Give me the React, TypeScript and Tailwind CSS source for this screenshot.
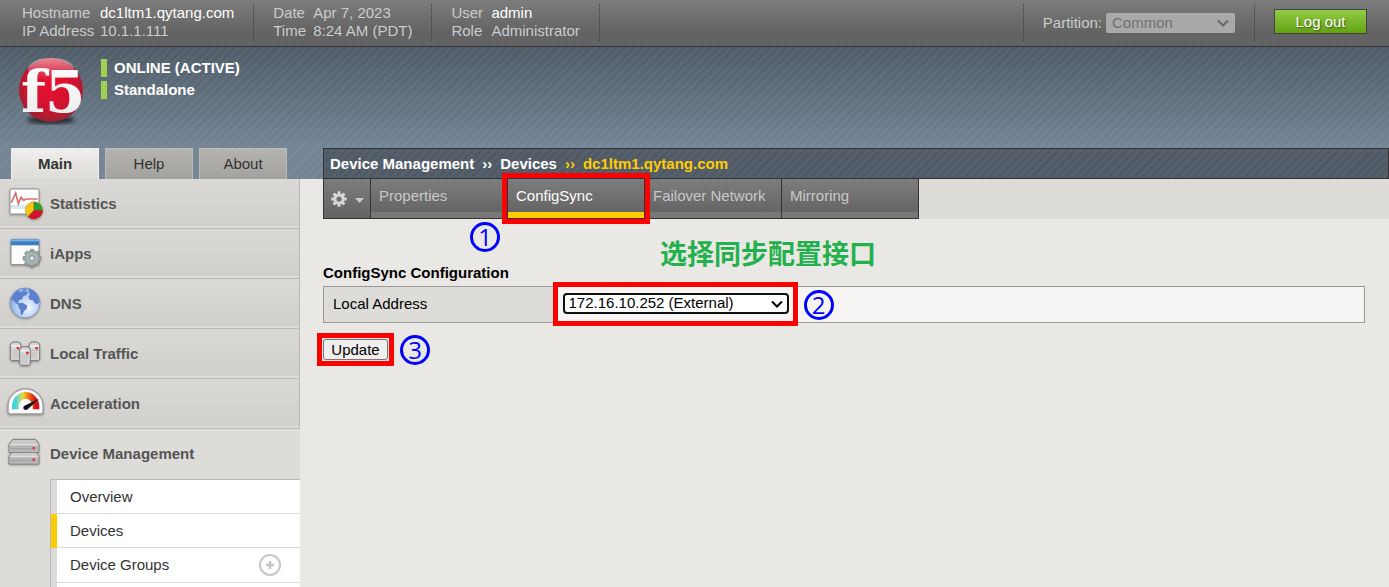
import type { ReactNode } from 'react';

const STRIPES =
  'bg-[repeating-linear-gradient(135deg,rgba(255,255,255,0.035)_0px,rgba(255,255,255,0.035)_3px,transparent_3px,transparent_6px)]';

function Logo() {
  return (
    <svg viewBox="0 0 72 72" className="h-[72px] w-[72px] shrink-0" role="img" aria-label="F5">
      <defs>
        <radialGradient id="ball" cx="50%" cy="42%" r="60%">
          <stop offset="0" stopColor="#e8112f" />
          <stop offset="0.65" stopColor="#cf1330" />
          <stop offset="0.9" stopColor="#a3202f" />
          <stop offset="1" stopColor="#8a2a33" />
        </radialGradient>
        <linearGradient id="gloss" x1="0" y1="0" x2="0" y2="1">
          <stop offset="0" stopColor="#fff" stopOpacity="0.5" />
          <stop offset="1" stopColor="#fff" stopOpacity="0" />
        </linearGradient>
        <linearGradient id="letters" x1="0" y1="0" x2="0" y2="1">
          <stop offset="0" stopColor="#fff" />
          <stop offset="1" stopColor="#e9e9ea" />
        </linearGradient>
        <filter id="soft">
          <feGaussianBlur stdDeviation="2" />
        </filter>
      </defs>
      <ellipse cx="36" cy="64" rx="24" ry="4" fill="#20262d" filter="url(#soft)" />
      <circle cx="36" cy="34" r="32" fill="url(#ball)" />
      <ellipse cx="36" cy="13" rx="23" ry="11" fill="url(#gloss)" />
      <g fill="url(#letters)" fontFamily="'DejaVu Serif', serif" fontWeight="700">
        <text x="6" y="56" fontSize="58">f</text>
        <text x="30" y="56" fontSize="58">5</text>
      </g>
    </svg>
  );
}

function StatisticsIcon() {
  return (
    <>
      <rect x="6" y="9" width="87" height="75" rx="3" fill="#fff" stroke="#8f8f8f" strokeWidth="3" />
      <path d="M9 60h81M9 66h81" stroke="#cfdfee" strokeWidth="4" />
      <path d="M10 50l13-29 8 32 8-19 8 9 6-4h36" fill="none" stroke="#d86c72" strokeWidth="5" />
      <circle cx="78" cy="73" r="26" fill="#f5c518" stroke="#8a6a20" strokeWidth="1" />
      <path d="M78 73V47a26 26 0 0 1 26 26z" fill="#27a22d" />
      <path d="M78 73h26a26 26 0 0 1-44 19z" fill="#d5152f" />
      <path d="M78 73V47M78 73h26M78 73L60 92" stroke="#5b4a1a" strokeWidth="1.5" />
    </>
  );
}

const TEETH = [0, 45, 90, 135, 180, 225, 270, 315];

function IAppsIcon() {
  return (
    <>
      <rect x="9" y="10" width="84" height="76" rx="3" fill="#fcfcfc" stroke="#858585" strokeWidth="3" />
      <rect x="9" y="10" width="84" height="18" fill="#3c7fc0" />
      <rect x="9" y="10" width="84" height="6" fill="#79b4e6" />
      <g fill="#a3aeae" stroke="#6f7b7b" strokeWidth="2">
        {TEETH.map((a) => (
          <rect key={a} x="66" y="40" width="12" height="14" rx="3" transform={`rotate(${a} 72 67)`} />
        ))}
        <circle cx="72" cy="67" r="21" />
      </g>
      <circle cx="72" cy="67" r="20" fill="#a9b4b4" />
      <circle cx="72" cy="67" r="8" fill="#dfe3e3" stroke="#7f8a8a" strokeWidth="3" />
    </>
  );
}

function DnsIcon() {
  return (
    <>
      <defs>
        <radialGradient id="globe" cx="60%" cy="65%" r="65%">
          <stop offset="0" stopColor="#f3f8ff" />
          <stop offset="0.6" stopColor="#b7cdf2" />
          <stop offset="1" stopColor="#7d9fd9" />
        </radialGradient>
      </defs>
      <circle cx="51" cy="51" r="45" fill="url(#globe)" stroke="#8797b8" strokeWidth="3" />
      <path
        d="M10 42c4-18 16-31 32-35l10 2-3 7 9 2-2 8-10 5-4 9-9 3-3 7 7 5-5 3-10-8-6-9zM33 52l12-1 13 8-2 9-8 7-5 12-5-1-1-14-6-9zM64 9c13 3 22 12 27 22l4 16-7 8-8-3-5-9-10-2-4-9 6-7-4-6z"
        fill="#5b80cf"
      />
      <path d="M30 12l14-5 4 6-12 7z" fill="#8fb0ea" />
    </>
  );
}

function ServerTower({ x, y }: { x: number; y: number }) {
  return (
    <g transform={`translate(${x} ${y})`}>
      <path d="M2 12Q4 2 12 2h12q8 0 10 10v42l-5 4H7l-5-4z" fill="#d5d5d5" stroke="#767676" strokeWidth="3" />
      <path d="M5 14h26" stroke="#f4f4f4" strokeWidth="4" />
      <path d="M8 28h12M8 35h18M8 42h18M8 49h18" stroke="#b4b4b4" strokeWidth="2" />
      <rect x="21" y="17" width="8" height="7" fill="#ef2b3c" />
      <rect x="23" y="25" width="4" height="4" fill="#57c45a" />
    </g>
  );
}

function TrafficIcon() {
  return (
    <>
      <ServerTower x={5} y={16} />
      <ServerTower x={61} y={16} />
      <ServerTower x={33} y={30} />
    </>
  );
}

function AccelerationIcon() {
  return (
    <>
      <defs>
        <linearGradient id="dial" x1="0" x2="1">
          <stop offset="0" stopColor="#43d3d6" />
          <stop offset="0.2" stopColor="#9bdc9b" />
          <stop offset="0.4" stopColor="#f2cf1d" />
          <stop offset="0.65" stopColor="#f06a16" />
          <stop offset="1" stopColor="#d5111e" />
        </linearGradient>
      </defs>
      <path d="M0 60a52 51 0 0 1 105 0v18q0 6-6 6H6q-6 0-6-6z" fill="#fbfbfb" stroke="#9a9a9a" strokeWidth="4" />
      <path d="M22 70V62a31 34 0 0 1 62 0v8" fill="none" stroke="url(#dial)" strokeWidth="20" />
      <path d="M48 60L93 38 60 69q-7 6-13 0-3-5 1-9z" fill="#111" />
    </>
  );
}

function Appliance({ y }: { y: number }) {
  return (
    <g transform={`translate(0 ${y})`}>
      <path d="M15 1h68l10 15v24H3V16z" fill="#c9c9c9" stroke="#7c7c7c" strokeWidth="3" />
      <path d="M5 17h86" stroke="#e6e6e6" strokeWidth="3" />
      <path d="M5 20h86v18H5z" fill="#b5b5b5" />
      <path d="M10 29h58" stroke="#a0a0a0" strokeWidth="3" />
      <rect x="73" y="24" width="8" height="7" fill="#ee3348" />
    </g>
  );
}

function DeviceIcon() {
  return (
    <>
      <Appliance y={44} />
      <Appliance y={9} />
    </>
  );
}

const MENU: { label: string; icon: ReactNode }[] = [
  { label: 'Statistics', icon: <StatisticsIcon /> },
  { label: 'iApps', icon: <IAppsIcon /> },
  { label: 'DNS', icon: <DnsIcon /> },
  { label: 'Local Traffic', icon: <TrafficIcon /> },
  { label: 'Acceleration', icon: <AccelerationIcon /> },
];

function MenuLink({ label, icon }: { label: string; icon: ReactNode }) {
  return (
    <a href="#" className="flex h-[49px] items-center gap-[6px] pl-2 font-bold text-[#555]">
      <svg viewBox="0 0 108 108" className="h-9 w-9 overflow-visible drop-shadow-[0_1px_1px_rgba(0,0,0,0.3)]" aria-hidden="true">
        {icon}
      </svg>
      {label}
    </a>
  );
}

function Info({ rows, cols }: { rows: [string, string, boolean][]; cols: string }) {
  return (
    <dl className={`grid h-[37px] content-start border-r border-dotted border-[#3c3c3c] pr-[19px] leading-[18px] ${cols}`}>
      {rows.map(([k, v, strong]) => (
        <div key={k} className="contents">
          <dt>{k}</dt>
          <dd className={strong ? 'text-white' : ''}>{v}</dd>
        </div>
      ))}
    </dl>
  );
}

function Step({ n, place }: { n: number; place: string }) {
  return (
    <span
      className={`absolute flex h-[30px] w-[30px] items-center justify-center rounded-full border-3 border-[#0000ff] font-['Open_Sans',sans-serif] text-2xl leading-none font-medium text-[#0000ff] ${place}`}
    >
      {n}
    </span>
  );
}

function Chevron({ className }: { className: string }) {
  return (
    <svg viewBox="0 0 12 8" className={`pointer-events-none absolute h-2 w-3 ${className}`} fill="none" stroke="currentColor" strokeWidth="2" aria-hidden="true">
      <path d="M1 1.500l5 5 5-5" />
    </svg>
  );
}

function Gear() {
  return (
    <svg viewBox="0 0 16 16" className="h-4 w-4" aria-hidden="true">
      <g fill="#d6d6d6">
        {TEETH.map((a) => (
          <rect key={a} x="6.5" y="0.3" width="3" height="4" rx="0.5" transform={`rotate(${a} 8 8)`} />
        ))}
      </g>
      <circle cx="8" cy="8" r="4.1" fill="none" stroke="#d6d6d6" strokeWidth="3" />
    </svg>
  );
}

const TABS = ['Properties', 'ConfigSync', 'Failover Network', 'Mirroring'];

export default function App() {
  return (
    <div className="flex min-h-screen flex-col bg-[#eae8e4] font-['Liberation_Sans',Arial,sans-serif] text-[15px] leading-[18px] text-[#333]">
      <header>
        <div className="flex h-[47px] items-start justify-between border-b border-[#333] bg-linear-to-b from-[#7d7d7d] to-[#636363] to-70% pt-1 pr-[22px] pl-[22px] text-[#ccc]">
          <div className="flex gap-[19px]">
            <Info cols="grid-cols-[78px_auto]" rows={[['Hostname', 'dc1ltm1.qytang.com', true], ['IP Address', '10.1.1.111', false]]} />
            <Info cols="grid-cols-[40px_auto]" rows={[['Date', 'Apr 7, 2023', false], ['Time', '8:24 AM (PDT)', false]]} />
            <Info cols="grid-cols-[40px_auto]" rows={[['User', 'admin', true], ['Role', 'Administrator', false]]} />
          </div>
          <div className="flex">
            <div className="flex h-[37px] items-center gap-1 border-x border-dotted border-[#3c3c3c] px-[19px]">
              <label htmlFor="partition">Partition:</label>
              <div className="relative flex text-[#666]">
                <select id="partition" disabled className="h-5 w-[129px] appearance-none rounded-xs bg-[#a9a9a9] pl-[6px] leading-[18px] text-[#717171] opacity-100">
                  <option>Common</option>
                </select>
                <Chevron className="top-[6px] right-[6px]" />
              </div>
            </div>
            <button className="mt-[5px] ml-[19px] h-[25px] w-[93px] border border-[#444] bg-linear-to-b from-[#93cc45] to-[#62a30c] text-white text-shadow-[1px_1px_2px_rgba(0,0,0,0.5)]">
              Log out
            </button>
          </div>
        </div>
        <div className="bg-linear-to-b from-[#4f5b67] to-[#738495] to-75%">
          <div className={`flex h-[132px] flex-col justify-between ${STRIPES}`}>
            <div className="flex pt-[9px] pl-[15px]">
              <Logo />
              <div className="mt-[3px] ml-[14px] flex flex-col gap-1 font-bold text-white">
                <span className="border-l-6 border-[#a0d050] pl-[7px]">ONLINE (ACTIVE)</span>
                <span className="border-l-6 border-[#a0d050] pl-[7px]">Standalone</span>
              </div>
            </div>
            <div className="flex h-[31px]">
              <nav className="flex w-[323px] shrink-0 gap-[6px] pl-[11px]">
                <a href="#" className="flex w-[88px] items-center justify-center border border-b-0 border-[#f2f1ef] bg-linear-to-b from-[#efeeec] to-[#dedcd8] font-bold">Main</a>
                <a href="#" className="flex w-[88px] items-center justify-center border border-b-0 border-[#bdbdb8] bg-linear-to-b from-[#b4b3af] to-[#a3a29e]">Help</a>
                <a href="#" className="flex w-[88px] items-center justify-center border border-b-0 border-[#bdbdb8] bg-linear-to-b from-[#b4b3af] to-[#a3a29e]">About</a>
              </nav>
              <div className="flex-1 border border-[#333] bg-[#4f5a66]">
                <div className={`flex h-full items-center gap-2 pl-[6px] font-bold text-white ${STRIPES}`}>
                  <span>Device Management</span>
                  <span>››</span>
                  <span>Devices</span>
                  <span className="text-[#ffcc00]">››</span>
                  <span className="text-[#ffcc00]">dc1ltm1.qytang.com</span>
                </div>
              </div>
            </div>
          </div>
        </div>
      </header>

      <div className="flex flex-1">
        <aside className="flex w-[300px] shrink-0 flex-col bg-[#dedcd8]">
          <ul className="border-r border-[#b9b9b9]">
            {MENU.map((m) => (
              <li key={m.label} className="border-b border-[#b9b9b9] bg-linear-to-b from-[#dad9d5] to-[#d0cfcb] shadow-[inset_0_-2px_0_#dedcd8]">
                <MenuLink {...m} />
              </li>
            ))}
          </ul>
          <div className="pb-px">
            <MenuLink label="Device Management" icon={<DeviceIcon />} />
          </div>
          <div className="ml-[50px] flex flex-1 flex-col border-t border-l border-[#b9b9b9] bg-white">
            <ul>
              <li className="flex h-[34px] border-l-6 border-[#dcdada]">
                <a href="#" className="flex flex-1 items-center border-b border-[#ddd] pl-[13px]">Overview</a>
              </li>
              <li className="flex h-[34px] border-l-6 border-[#ffcc00]">
                <a href="#" className="flex flex-1 items-center border-b border-[#ddd] pl-[13px]">Devices</a>
              </li>
              <li className="flex h-[35px] border-l-6 border-[#dcdada]">
                <div className="flex flex-1 items-center justify-between border-b border-[#ddd] pr-[19px] pl-[13px]">
                  <a href="#">Device Groups</a>
                  <button aria-label="Add device group">
                    <svg viewBox="0 0 22 22" className="h-[22px] w-[22px]" fill="none" stroke="#c6c6c6">
                      <circle cx="11" cy="11" r="10" strokeWidth="2" />
                      <path d="M11 7v8M7 11h8" strokeWidth="2.5" />
                    </svg>
                  </button>
                </div>
              </li>
            </ul>
            <div className="flex-1 border-l-6 border-[#dcdada]" />
          </div>
        </aside>

        <main className="min-w-0 flex-1 pl-[23px]">
          <div className="flex h-10 bg-[#dedcd8]">
            <button aria-label="Options" className="flex w-12 items-center justify-center gap-2 border-x border-b border-[#333] bg-linear-to-b from-[#7d7d7d] to-[#636363]">
              <Gear />
              <svg viewBox="0 0 9 5" className="mt-1 h-[5px] w-[9px]" aria-hidden="true">
                <path d="M0 0h9L4.500 5z" fill="#ccc" />
              </svg>
            </button>
            {TABS.map((t) => {
              const active = t === 'ConfigSync';
              return (
                <div key={t} className="relative w-[137px]">
                  <a
                    href="#"
                    className={`flex h-10 flex-col justify-between border-r border-b border-[#333] bg-linear-to-b from-[#7d7d7d] to-[#616161] ${active ? 'text-white' : 'text-[#c8c8c8]'}`}
                  >
                    <span className="pt-2 pl-2 whitespace-nowrap">{t}</span>
                    <span className={`h-[6px] ${active ? 'bg-[#ffcc00]' : 'bg-[#777]'}`} />
                  </a>
                  {active && (
                    <>
                      <span className="absolute -top-[6px] -right-[5px] -bottom-[5px] -left-[6px] z-10 border-5 border-[#ff0000]" />
                      <Step n={1} place="top-[43px] -left-[38px]" />
                    </>
                  )}
                </div>
              );
            })}
          </div>

          <form className="pr-6" onSubmit={(e) => e.preventDefault()}>
            <div className="relative">
              <h1 className="pt-[45px] pb-[4px] font-bold text-black">ConfigSync Configuration</h1>
              <p className="absolute top-[14px] left-[337px] font-['Noto_Sans_CJK_SC',sans-serif] text-[27px] leading-10 font-bold whitespace-nowrap text-[#22b14c]">
                选择同步配置接口
              </p>
            </div>
            <table className="w-full border-collapse">
              <tbody>
                <tr className="h-9 border border-[#999]">
                  <th scope="row" className="w-[231px] bg-[#dedcd8] pb-[2px] pl-[9px] text-left font-normal text-black">
                    <label htmlFor="address">Local Address</label>
                  </th>
                  <td className="bg-[#f6f5f3] pb-[2px] pl-2">
                    <div className="relative flex w-[226px]">
                      <select id="address" className="h-[21px] w-full appearance-none rounded-sm border-2 border-[#101010] bg-white pb-px pl-1 leading-4 text-black">
                        <option>172.16.10.252 (External)</option>
                      </select>
                      <Chevron className="top-[7px] right-[6px] text-black" />
                      <span className="pointer-events-none absolute -top-[11px] -right-[9px] -bottom-3 -left-[10px] border-5 border-[#ff0000]" />
                      <Step n={2} place="-top-[3px] -right-[45px]" />
                    </div>
                  </td>
                </tr>
              </tbody>
            </table>
            <div className="relative mt-4 flex w-[65px]">
              <button className="h-[21px] w-full rounded-[3px] border border-[#767676] bg-[#efefef] leading-[18px] text-black">Update</button>
              <span className="pointer-events-none absolute -inset-[6px] border-5 border-[#ff0000]" />
              <Step n={3} place="-top-1 -right-[42px]" />
            </div>
          </form>
        </main>
      </div>
    </div>
  );
}
